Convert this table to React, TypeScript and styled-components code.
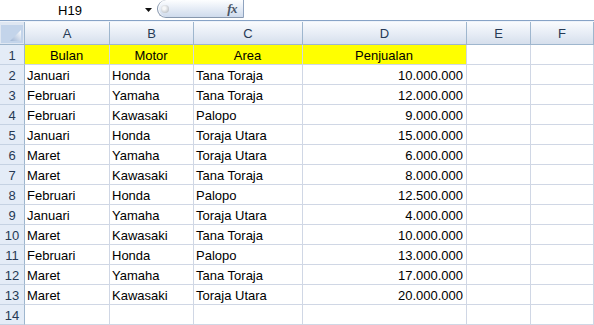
import React from "react";
import styled, { createGlobalStyle } from "styled-components";

const Global = createGlobalStyle`
  html, body { margin: 0; padding: 0; background: #fff; overflow: hidden; }
  body { font-family: "Liberation Sans", Arial, sans-serif; }
`;

const COLS = "25px 85px 84px 109px 164px 64px 1fr";

const Page = styled.div`
  width: 594px;
  height: 325px;
  overflow: hidden;
  display: flex;
  flex-direction: column;
  background: #fff;
`;

const Toolbar = styled.div`
  height: 20px;
  display: flex;
  align-items: flex-start;
  background: #fff;
  border-bottom: 1px solid #87a3c6;
  box-shadow: 0 1px 0 #eef3fa;
  margin-bottom: 1px;
`;

const NameBox = styled.div`
  width: 140px;
  height: 20px;
  display: flex;
  align-items: center;
  justify-content: center;
  font-size: 13px;
  color: #000;
`;

const DropArrow = styled.div`
  width: 17px;
  height: 20px;
  display: flex;
  align-items: center;
  justify-content: flex-start;
  padding-left: 5px;
  box-sizing: border-box;
`;

const FormulaPill = styled.div`
  width: 87px;
  height: 18px;
  box-sizing: border-box;
  border: 1px solid #8797ad;
  border-top: none;
  border-right: 1px solid #8fa3bf;
  border-radius: 0 0 0 9px;
  border-top-left-radius: 9px;
  background: linear-gradient(#fdfeff, #e8eef7 45%, #cfdbec);
  box-shadow: inset 1px 0 0 #ffffff;
  display: flex;
  align-items: center;
  justify-content: space-between;
  padding: 0 6px 0 3px;
`;

const Dot = styled.div`
  width: 8px;
  height: 8px;
  border-radius: 50%;
  background: radial-gradient(circle at 40% 40%, #f6f7f8 20%, #a7adb4);
`;

const Fx = styled.span`
  font-family: "Liberation Serif", "Times New Roman", serif;
  font-style: italic;
  font-weight: bold;
  font-size: 13px;
  color: #4a5566;
  letter-spacing: -0.5px;
`;

const Grid = styled.div`
  display: flex;
  flex-direction: column;
`;

const Row = styled.div<{ $head?: boolean }>`
  display: grid;
  grid-template-columns: ${COLS};
  height: ${(p) => (p.$head ? "23px" : "20px")};
`;

const ColHead = styled.div`
  box-sizing: border-box;
  border-right: 1px solid #9eb6ce;
  border-bottom: 1px solid #9eb6ce;
  background: linear-gradient(#f9fbfd, #e6ecf5 55%, #d6dfec);
  display: flex;
  align-items: center;
  justify-content: center;
  font-size: 13px;
  color: #263a55;
  padding-top: 1px;
`;

const Corner = styled.div`
  box-sizing: border-box;
  border-right: 1px solid #9eb6ce;
  border-bottom: 1px solid #9eb6ce;
  background: #dfe7f2;
  padding: 3px 1px 1px 1px;
  display: flex;
`;

const CornerInner = styled.div`
  flex: 1;
  background: #c3d4ea;
  display: flex;
  align-items: flex-end;
  justify-content: flex-end;
  padding: 0 2px 2px 0;
`;

const RowHead = styled.div`
  box-sizing: border-box;
  border-right: 1px solid #9eb6ce;
  border-bottom: 1px solid #c5d2e3;
  background: #e4ecf7;
  display: flex;
  align-items: center;
  justify-content: center;
  font-size: 13px;
  color: #263a55;
  padding-top: 1px;
`;

const Cell = styled.div<{ $align?: "left" | "center" | "right"; $fill?: string }>`
  box-sizing: border-box;
  border-right: 1px solid #d0d7e5;
  border-bottom: 1px solid #d0d7e5;
  background: ${(p) => p.$fill || "#fff"};
  display: flex;
  align-items: center;
  justify-content: ${(p) =>
    p.$align === "right" ? "flex-end" : p.$align === "center" ? "center" : "flex-start"};
  padding: 2px 3px 0 2px;
  font-size: 13px;
  color: #000;
  white-space: nowrap;
  overflow: hidden;
`;

const data: [string, string, string, string][] = [
  ["Januari", "Honda", "Tana Toraja", "10.000.000"],
  ["Februari", "Yamaha", "Tana Toraja", "12.000.000"],
  ["Februari", "Kawasaki", "Palopo", "9.000.000"],
  ["Januari", "Honda", "Toraja Utara", "15.000.000"],
  ["Maret", "Yamaha", "Toraja Utara", "6.000.000"],
  ["Maret", "Kawasaki", "Tana Toraja", "8.000.000"],
  ["Februari", "Honda", "Palopo", "12.500.000"],
  ["Januari", "Yamaha", "Toraja Utara", "4.000.000"],
  ["Maret", "Kawasaki", "Tana Toraja", "10.000.000"],
  ["Februari", "Honda", "Palopo", "13.000.000"],
  ["Maret", "Yamaha", "Tana Toraja", "17.000.000"],
  ["Maret", "Kawasaki", "Toraja Utara", "20.000.000"],
];

const YELLOW = "#ffff00";

export default function App() {
  return (
    <Page>
      <Global />
      <Toolbar>
        <NameBox>H19</NameBox>
        <DropArrow>
          <svg width="7" height="4" viewBox="0 0 7 4">
            <path d="M0 0 H7 L3.5 4 Z" fill="#111" />
          </svg>
        </DropArrow>
        <FormulaPill>
          <Dot />
          <Fx>fx</Fx>
        </FormulaPill>
      </Toolbar>
      <Grid>
        <Row $head>
          <Corner>
            <CornerInner>
              <svg width="11" height="11" viewBox="0 0 11 11">
                <defs>
                  <linearGradient id="tri" x1="0" y1="1" x2="1" y2="0">
                    <stop offset="0" stopColor="#9db4d4" />
                    <stop offset="1" stopColor="#ffffff" />
                  </linearGradient>
                </defs>
                <path d="M11 0 V11 H0 Z" fill="url(#tri)" />
              </svg>
            </CornerInner>
          </Corner>
          {["A", "B", "C", "D", "E", "F"].map((c) => (
            <ColHead key={c}>{c}</ColHead>
          ))}
        </Row>
        <Row>
          <RowHead>1</RowHead>
          <Cell $align="center" $fill={YELLOW}>Bulan</Cell>
          <Cell $align="center" $fill={YELLOW}>Motor</Cell>
          <Cell $align="center" $fill={YELLOW}>Area</Cell>
          <Cell $align="center" $fill={YELLOW}>Penjualan</Cell>
          <Cell />
          <Cell />
        </Row>
        {data.map((r, i) => (
          <Row key={i}>
            <RowHead>{i + 2}</RowHead>
            <Cell>{r[0]}</Cell>
            <Cell>{r[1]}</Cell>
            <Cell>{r[2]}</Cell>
            <Cell $align="right">{r[3]}</Cell>
            <Cell />
            <Cell />
          </Row>
        ))}
        <Row>
          <RowHead>14</RowHead>
          <Cell />
          <Cell />
          <Cell />
          <Cell />
          <Cell />
          <Cell />
        </Row>
      </Grid>
    </Page>
  );
}
